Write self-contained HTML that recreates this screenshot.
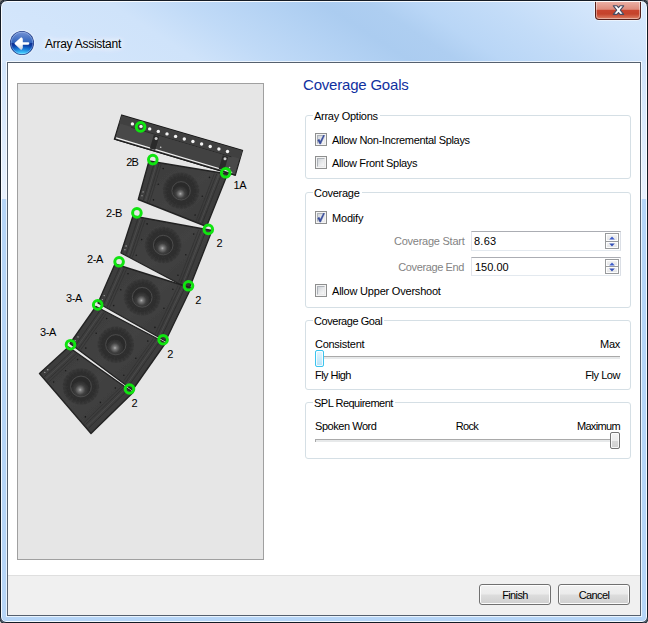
<!DOCTYPE html>
<html>
<head>
<meta charset="utf-8">
<title>Array Assistant</title>
<style>
html,body{margin:0;padding:0;}
body{width:648px;height:623px;overflow:hidden;background:linear-gradient(#858585 0,#a8a8a8 8px,#f4f4f4 20px,#fff 100%);position:relative;font-family:"Liberation Sans",sans-serif;font-size:11px;color:#000;letter-spacing:-0.27px;}
#win{position:absolute;left:0;top:0;width:648px;height:623px;border-radius:7px 7px 6px 6px;background:#b6d5f7;}
#title{position:absolute;left:0;top:0;width:648px;height:63px;border-radius:7px 7px 0 0;background:linear-gradient(33deg,#d5e7fc 0%,#cfe3fa 27%,#c0daf7 37%,#b2d1f3 49%,#abccf0 55.5%,#aecef1 62%,#b9d6f6 68%,#c3dcf8 78%,#d2e5fb 90%,#d8e9fd 100%);}
.side{position:absolute;top:63px;width:6px;height:136px;background:linear-gradient(#d0e4fb,#e8f1fd);}
#win:after{content:"";position:absolute;left:0;top:0;right:0;bottom:0;border:1px solid #141b25;border-radius:7px 7px 6px 6px;box-shadow:inset 0 0 0 1px rgba(255,255,255,.85),0 0 1px .4px #141b25;}
#client{position:absolute;left:7px;top:62px;width:632px;height:552px;border:1px solid #55606e;background:#fff;box-shadow:0 0 0 1px rgba(255,255,255,.7);}
#footer{position:absolute;left:0;top:512px;width:632px;height:39px;background:#f0f0f0;border-top:1px solid #dfdfdf;}
.t{position:absolute;white-space:nowrap;line-height:13px;height:13px;}
.r{text-align:right;}
.grp{position:absolute;border:1px solid #d5dfe5;border-radius:3px;}
.grp span{position:absolute;left:7px;top:-6px;background:#fff;padding:0 2px 0 1px;line-height:13px;white-space:nowrap;}
.cb{position:absolute;width:10px;height:11px;border:1px solid #8e8f8f;background:#f4f4f4;}
.cb i{position:absolute;left:1px;top:1px;width:6px;height:7px;border:1px solid;border-color:#aeb3b9 #e9e9ea #e9e9ea #aeb3b9;background:linear-gradient(135deg,#cfd3d8 0%,#e6e8ea 50%,#f7f7f7 100%);}
.cb svg{position:absolute;left:1px;top:1px;}
.edit{position:absolute;height:18px;border:1px solid;border-color:#abadb3 #dbdfe6 #e3e9ef #e2e3ea;background:#fff;}
.spin{position:absolute;width:12px;height:7px;border:1px solid #989a9c;background:linear-gradient(#f4f4f4,#e2e3e5);box-shadow:inset 0 0 0 1px rgba(255,255,255,.9);}
.spin.d{height:6px;}
.spin svg{position:absolute;left:0;top:0;}
.btn{position:absolute;width:70px;height:19px;border:1px solid #707070;border-radius:3px;background:linear-gradient(#f2f2f2 0%,#ebebeb 48%,#dddddd 52%,#cfcfcf 100%);box-shadow:inset 0 0 0 1px rgba(255,255,255,.9);text-align:center;line-height:21px;}
.thumb{position:absolute;width:7px;height:15px;border:1px solid #3cc4ee;border-radius:2px;background:linear-gradient(#e6f6fd,#b5e2f8);box-shadow:inset 0 0 0 1px rgba(255,255,255,.8);}
.thumb.g{width:8px;border-color:#737373;background:linear-gradient(#f3f3f3 0%,#ececec 50%,#d8d8d8 52%,#d0d0d0 100%);}
.track{position:absolute;height:2px;background:#e7e9ea;border-top:1px solid #a9a9a9;border-left:1px solid #a9a9a9;}
</style>
</head>
<body>
<div id="win">
  <div id="title"></div>
  <div class="side" style="left:1px"></div><div class="side" style="left:641px"></div>
  <!-- close button -->
  <div id="close" style="position:absolute;left:595px;top:1px;width:44px;height:18px;border:1px solid #56201b;border-top:none;border-radius:0 0 4px 4px;background:linear-gradient(#ecb3a8 0%,#de8c7c 46%,#c9452f 52%,#c4432b 72%,#dd8065 100%);box-shadow:inset 0 0 0 1px rgba(255,255,255,.4),0 0 0 1px rgba(255,255,255,.55);">
    <svg width="44" height="18" style="position:absolute;left:0;top:0"><path d="M17.3 4.8h3.7l1.5 1.9 1.5-1.9h3.7l-3.4 4.3 3.4 4.3h-3.7l-1.5-1.9-1.5 1.9h-3.7l3.4-4.3z" fill="#fff" stroke="#474c63" stroke-width="1.1" stroke-linejoin="round"/></svg>
  </div>
  <!-- back button -->
  <svg width="30" height="30" style="position:absolute;left:7.3px;top:27.6px" viewBox="0 0 30 30">
    <defs>
      <linearGradient id="bkt" x1="0" y1="0" x2="0" y2="1"><stop offset="0" stop-color="#b4c1e8"/><stop offset=".3" stop-color="#6f8fd2"/><stop offset="1" stop-color="#2a60bb"/></linearGradient>
      <radialGradient id="bkb" cx="50%" cy="82%" r="85%"><stop offset="0" stop-color="#74f2ff"/><stop offset=".22" stop-color="#3fc8fb"/><stop offset=".55" stop-color="#1878d6"/><stop offset=".85" stop-color="#0a3ba2"/><stop offset="1" stop-color="#0a2f96"/></radialGradient>
      <linearGradient id="arw" x1="0" y1="0" x2="0" y2="1"><stop offset="0" stop-color="#ffffff"/><stop offset=".55" stop-color="#ffffff"/><stop offset="1" stop-color="#cfd6e2"/></linearGradient>
      <clipPath id="bkc"><circle cx="15" cy="15" r="11.3"/></clipPath>
    </defs>
    <circle cx="15" cy="15" r="13.3" fill="#e4effc" opacity=".75"/>
    <circle cx="15" cy="15" r="12" fill="#16327f"/>
    <g clip-path="url(#bkc)">
      <rect x="0" y="0" width="30" height="15.3" fill="url(#bkt)"/>
      <rect x="0" y="15.3" width="30" height="15" fill="url(#bkb)"/>
    </g>
    <circle cx="15" cy="15" r="10.9" fill="none" stroke="#cfe0ff" stroke-opacity=".45" stroke-width=".8"/>
    <g fill="url(#arw)" stroke="url(#arw)" stroke-linejoin="round" stroke-linecap="round">
      <path d="M8.6 15.5L14.2 10.4L14.8 11.2L14.8 19.8L14.2 20.7z" stroke-width="2"/>
      <path d="M14 15.5L21.2 15.5" stroke-width="2.3" fill="none" stroke="#fff"/>
    </g>
  </svg>
  <div class="t" style="left:45px;top:37px;font-size:12px;line-height:14px;height:14px;text-shadow:0 0 5px #fff,0 0 8px #fff,0 0 10px rgba(255,255,255,.8);">Array Assistant</div>

  <div id="client">
    <!-- left preview panel -->
    <div style="position:absolute;left:9px;top:20px;width:245px;height:475px;border:1px solid #a0a0a0;background:#e6e6e6;"></div>
    <div class="t" style="left:295px;top:12px;font-size:15px;line-height:20px;height:20px;color:#1030a0;letter-spacing:-0.2px;">Coverage Goals</div>

    <div class="grp" style="left:297px;top:52px;width:324px;height:62px;"><span>Array Options</span></div>
    <div class="grp" style="left:297px;top:129px;width:324px;height:114px;"><span>Coverage</span></div>
    <div class="grp" style="left:297px;top:257px;width:324px;height:68px;"><span style="letter-spacing:-0.45px;">Coverage Goal</span></div>
    <div class="grp" style="left:297px;top:339px;width:324px;height:55px;"><span style="letter-spacing:-0.50px;">SPL Requirement</span></div>

    <div id="footer"></div>

    <!-- checkboxes -->
    <div class="cb" style="left:307px;top:70px;"><i></i><svg width="10" height="11" viewBox="0 0 10 11"><path d="M0.7 5.3L2.1 4.1L3.3 6.3L6.5 0.1L7.6 0.6L3.7 9.1L2.7 9.1Z" fill="#3a4e9c" stroke="#3a4e9c" stroke-width=".4"/></svg></div>
    <div class="t" style="left:324px;top:71px;letter-spacing:-0.32px;">Allow Non-Incremental Splays</div>
    <div class="cb" style="left:307px;top:93px;"><i></i></div>
    <div class="t" style="left:324px;top:94px;letter-spacing:-0.33px;">Allow Front Splays</div>

    <div class="cb" style="left:307px;top:148px;"><i></i><svg width="10" height="11" viewBox="0 0 10 11"><path d="M0.7 5.3L2.1 4.1L3.3 6.3L6.5 0.1L7.6 0.6L3.7 9.1L2.7 9.1Z" fill="#3a4e9c" stroke="#3a4e9c" stroke-width=".4"/></svg></div>
    <div class="t" style="left:324px;top:149px;letter-spacing:-0.18px;">Modify</div>

    <div class="t r" style="left:356.5px;width:100px;top:172px;color:#838383;letter-spacing:-0.25px;">Coverage Start</div>
    <div class="edit" style="left:463px;top:168px;width:148px;"></div>
    <div class="t" style="left:466px;top:172px;letter-spacing:0.25px;">8.63</div>
    <div class="spin" style="left:597px;top:170px;"><svg width="12" height="7" viewBox="0 0 12 7"><path d="M3.2 5.6L6 2.4L8.8 5.6z" fill="#3d5ccc"/></svg></div>
    <div class="spin d" style="left:597px;top:178px;"><svg width="12" height="6" viewBox="0 0 12 6"><path d="M3.2 1.4L8.8 1.4L6 4.6z" fill="#3450b8"/></svg></div>

    <div class="t r" style="left:356px;width:100px;top:198px;color:#838383;letter-spacing:-0.38px;">Coverage End</div>
    <div class="edit" style="left:463px;top:194px;width:148px;height:17px;"></div>
    <div class="t" style="left:467px;top:198px;letter-spacing:0;">150.00</div>
    <div class="spin d" style="left:597px;top:196px;"><svg width="12" height="7" viewBox="0 0 12 7"><path d="M3.2 5.6L6 2.4L8.8 5.6z" fill="#3d5ccc"/></svg></div>
    <div class="spin d" style="left:597px;top:203px;"><svg width="12" height="6" viewBox="0 0 12 6"><path d="M3.2 1.4L8.8 1.4L6 4.6z" fill="#3450b8"/></svg></div>

    <div class="cb" style="left:307px;top:221px;"><i></i></div>
    <div class="t" style="left:324px;top:222px;letter-spacing:-0.21px;">Allow Upper Overshoot</div>

    <!-- sliders -->
    <div class="t" style="left:307px;top:275px;">Consistent</div>
    <div class="t r" style="left:512px;width:100px;top:275px;">Max</div>
    <div class="track" style="left:307px;top:293px;width:304px;"></div>
    <div class="thumb" style="left:307px;top:287px;"></div>
    <div class="t" style="left:307px;top:306px;letter-spacing:-0.55px;">Fly High</div>
    <div class="t r" style="left:512px;width:100px;top:306px;letter-spacing:-0.45px;">Fly Low</div>

    <div class="t" style="left:307px;top:357px;letter-spacing:-0.45px;">Spoken Word</div>
    <div class="t" style="left:409px;width:100px;top:357px;text-align:center;letter-spacing:-0.70px;">Rock</div>
    <div class="t r" style="left:512px;width:100px;top:357px;letter-spacing:-0.65px;">Maximum</div>
    <div class="track" style="left:307px;top:376px;width:304px;"></div>
    <div class="thumb g" style="left:602px;top:369px;"></div>

    <div class="btn" style="left:471px;top:521px;letter-spacing:-0.60px;">Finish</div>
    <div class="btn" style="left:550px;top:521px;letter-spacing:-0.60px;">Cancel</div>

  </div>
<svg id="arr" width="648" height="623" viewBox="0 0 648 623" style="position:absolute;left:0;top:0;">
<defs>
<radialGradient id="cone" cx="46%" cy="66%" r="55%"><stop offset="0" stop-color="#b0b0b0"/><stop offset=".15" stop-color="#7a7a7a"/><stop offset=".45" stop-color="#3e3e3e"/><stop offset=".8" stop-color="#2a2a2a"/><stop offset="1" stop-color="#2c2c2c"/></radialGradient>
<radialGradient id="gr" cx="50%" cy="50%" r="50%"><stop offset="0" stop-color="#2a2a2a"/><stop offset=".75" stop-color="#303030"/><stop offset="1" stop-color="#303030" stop-opacity="0"/></radialGradient>
<linearGradient id="cab" x1="0" y1="0" x2="1" y2="1"><stop offset="0" stop-color="#3a3a3a"/><stop offset=".5" stop-color="#424242"/><stop offset="1" stop-color="#363636"/></linearGradient>
<filter id="soft" x="-5%" y="-5%" width="110%" height="110%"><feGaussianBlur stdDeviation="0.45"/></filter>
</defs>
<g filter="url(#soft)">
<polygon points="121.7,115.1 242.5,150.3 235.3,175.3 114.4,139.2" fill="#484848" stroke="#1e1e1e" stroke-width="1.2"/>
<polygon points="121.6,115.6 242.4,150.8 240.1,158.8 119.2,123.3" fill="#404040"/>
<polyline points="131.2,127.3 231.4,156.8" stroke="#2c2c2c" stroke-width="1" fill="none"/>
<polygon points="160.0,136.3 222.8,154.8 219.1,167.8 156.2,149.0" fill="#434343"/>
<polyline points="116.1,137.9 232.2,172.5" stroke="#f2f2f2" stroke-width="1.3" fill="none"/>
<polyline points="114.4,139.2 235.3,175.3" stroke="#1e1e1e" stroke-width="1" fill="none"/>
<circle cx="132.4" cy="123.9" r="1.7" fill="#f4f4f4"/>
<circle cx="141.0" cy="126.4" r="1.7" fill="#f4f4f4"/>
<circle cx="149.7" cy="128.9" r="1.7" fill="#f4f4f4"/>
<circle cx="158.3" cy="131.4" r="1.7" fill="#f4f4f4"/>
<circle cx="167.0" cy="133.9" r="1.7" fill="#f4f4f4"/>
<circle cx="175.6" cy="136.4" r="1.7" fill="#f4f4f4"/>
<circle cx="184.3" cy="139.0" r="1.7" fill="#f4f4f4"/>
<circle cx="192.9" cy="141.5" r="1.7" fill="#f4f4f4"/>
<circle cx="201.6" cy="144.0" r="1.7" fill="#f4f4f4"/>
<circle cx="210.2" cy="146.5" r="1.7" fill="#f4f4f4"/>
<circle cx="218.9" cy="149.0" r="1.7" fill="#f4f4f4"/>
<circle cx="227.5" cy="151.5" r="1.7" fill="#f4f4f4"/>
<polygon points="153.8,135.1 159.3,136.7 155.3,150.1 149.8,148.5" fill="#2a2a2a"/>
<circle cx="156.1" cy="138.4" r="1.5" fill="#cfcfcf"/>
<circle cx="160.7" cy="147.2" r=".8" fill="#cfcfcf"/>
<polygon points="222.7,155.3 228.1,156.9 224.2,170.6 218.7,169.0" fill="#2a2a2a"/>
<circle cx="225.0" cy="158.7" r="1.5" fill="#cfcfcf"/>
<circle cx="229.6" cy="167.6" r=".8" fill="#cfcfcf"/>
<polygon points="149.0,161.0 227.5,174.0 206.5,226.5 138.3,199.5" fill="url(#cab)" stroke="#232323" stroke-width="1.4" stroke-linejoin="round"/>
<line x1="154.2" y1="163.1" x2="143.4" y2="200.2" stroke="#2a2a2a" stroke-width=".7"/>
<line x1="156.5" y1="163.5" x2="145.5" y2="201.0" stroke="#505050" stroke-width=".7"/>
<line x1="158.8" y1="163.9" x2="147.5" y2="201.8" stroke="#2c2c2c" stroke-width=".7"/>
<line x1="161.2" y1="164.3" x2="149.6" y2="202.6" stroke="#2f2f2f" stroke-width=".7"/>
<line x1="214.4" y1="173.4" x2="196.2" y2="220.7" stroke="#2f2f2f" stroke-width=".7"/>
<line x1="216.7" y1="173.8" x2="198.2" y2="221.5" stroke="#2c2c2c" stroke-width=".7"/>
<line x1="219.1" y1="174.2" x2="200.3" y2="222.3" stroke="#505050" stroke-width=".7"/>
<line x1="221.4" y1="174.6" x2="202.3" y2="223.1" stroke="#2a2a2a" stroke-width=".7"/>
<circle cx="163.2" cy="168.6" r=".8" fill="#1c1c1c"/>
<circle cx="158.3" cy="184.2" r=".8" fill="#1c1c1c"/>
<circle cx="153.5" cy="199.9" r=".8" fill="#1c1c1c"/>
<circle cx="209.5" cy="177.4" r=".8" fill="#1c1c1c"/>
<circle cx="202.3" cy="196.2" r=".8" fill="#1c1c1c"/>
<circle cx="195.1" cy="215.1" r=".8" fill="#1c1c1c"/>
<circle cx="143.1" cy="191.9" r=".7" fill="#aaa"/>
<circle cx="142.0" cy="195.8" r=".7" fill="#999"/>
<circle cx="181.1" cy="190.8" r="19" fill="url(#gr)"/>
<circle cx="181.1" cy="190.8" r="15.5" fill="none" stroke="#2c2c2c" stroke-width="5" stroke-dasharray="2.2 1.6" opacity=".32"/>
<circle cx="181.1" cy="190.8" r="9.2" fill="url(#cone)" stroke="#585858" stroke-width=".7"/>
<polygon points="133.0,216.0 212.0,230.5 189.0,289.0 121.0,253.0" fill="url(#cab)" stroke="#232323" stroke-width="1.4" stroke-linejoin="round"/>
<line x1="138.1" y1="218.2" x2="126.1" y2="254.4" stroke="#2a2a2a" stroke-width=".7"/>
<line x1="140.5" y1="218.6" x2="128.2" y2="255.4" stroke="#505050" stroke-width=".7"/>
<line x1="142.9" y1="219.1" x2="130.2" y2="256.5" stroke="#2c2c2c" stroke-width=".7"/>
<line x1="145.2" y1="219.5" x2="132.3" y2="257.5" stroke="#2f2f2f" stroke-width=".7"/>
<line x1="198.7" y1="229.8" x2="178.8" y2="281.6" stroke="#2f2f2f" stroke-width=".7"/>
<line x1="201.1" y1="230.3" x2="180.8" y2="282.6" stroke="#2c2c2c" stroke-width=".7"/>
<line x1="203.4" y1="230.7" x2="182.9" y2="283.7" stroke="#505050" stroke-width=".7"/>
<line x1="205.8" y1="231.2" x2="184.9" y2="284.8" stroke="#2a2a2a" stroke-width=".7"/>
<circle cx="147.1" cy="223.9" r=".8" fill="#1c1c1c"/>
<circle cx="141.7" cy="239.6" r=".8" fill="#1c1c1c"/>
<circle cx="136.3" cy="255.2" r=".8" fill="#1c1c1c"/>
<circle cx="193.7" cy="234.1" r=".8" fill="#1c1c1c"/>
<circle cx="185.8" cy="254.7" r=".8" fill="#1c1c1c"/>
<circle cx="177.9" cy="275.3" r=".8" fill="#1c1c1c"/>
<circle cx="126.1" cy="246.0" r=".7" fill="#aaa"/>
<circle cx="124.9" cy="249.7" r=".7" fill="#999"/>
<circle cx="163.2" cy="245.1" r="19" fill="url(#gr)"/>
<circle cx="163.2" cy="245.1" r="15.5" fill="none" stroke="#2c2c2c" stroke-width="5" stroke-dasharray="2.2 1.6" opacity=".32"/>
<circle cx="163.2" cy="245.1" r="9.8" fill="url(#cone)" stroke="#585858" stroke-width=".7"/>
<polygon points="115.0,264.0 191.0,288.0 165.5,341.0 98.0,303.0" fill="url(#cab)" stroke="#232323" stroke-width="1.4" stroke-linejoin="round"/>
<line x1="119.8" y1="266.9" x2="103.3" y2="304.5" stroke="#2a2a2a" stroke-width=".7"/>
<line x1="122.1" y1="267.6" x2="105.3" y2="305.6" stroke="#505050" stroke-width=".7"/>
<line x1="124.3" y1="268.3" x2="107.3" y2="306.7" stroke="#2c2c2c" stroke-width=".7"/>
<line x1="126.6" y1="269.1" x2="109.4" y2="307.8" stroke="#2f2f2f" stroke-width=".7"/>
<line x1="178.1" y1="285.7" x2="155.4" y2="333.4" stroke="#2f2f2f" stroke-width=".7"/>
<line x1="180.4" y1="286.4" x2="157.5" y2="334.5" stroke="#2c2c2c" stroke-width=".7"/>
<line x1="182.7" y1="287.1" x2="159.5" y2="335.7" stroke="#505050" stroke-width=".7"/>
<line x1="184.9" y1="287.9" x2="161.5" y2="336.8" stroke="#2a2a2a" stroke-width=".7"/>
<circle cx="128.0" cy="273.8" r=".8" fill="#1c1c1c"/>
<circle cx="120.8" cy="289.7" r=".8" fill="#1c1c1c"/>
<circle cx="113.7" cy="305.6" r=".8" fill="#1c1c1c"/>
<circle cx="172.9" cy="289.2" r=".8" fill="#1c1c1c"/>
<circle cx="163.9" cy="308.3" r=".8" fill="#1c1c1c"/>
<circle cx="154.9" cy="327.4" r=".8" fill="#1c1c1c"/>
<circle cx="104.2" cy="295.6" r=".7" fill="#aaa"/>
<circle cx="102.4" cy="299.6" r=".7" fill="#999"/>
<circle cx="142.2" cy="297.3" r="19" fill="url(#gr)"/>
<circle cx="142.2" cy="297.3" r="15.5" fill="none" stroke="#2c2c2c" stroke-width="5" stroke-dasharray="2.2 1.6" opacity=".32"/>
<circle cx="142.2" cy="297.3" r="9.9" fill="url(#cone)" stroke="#585858" stroke-width=".7"/>
<polygon points="96.0,306.5 165.5,343.0 132.5,390.0 70.0,343.5" fill="url(#cab)" stroke="#232323" stroke-width="1.4" stroke-linejoin="round"/>
<line x1="100.1" y1="310.2" x2="75.2" y2="345.6" stroke="#2a2a2a" stroke-width=".7"/>
<line x1="102.1" y1="311.3" x2="77.1" y2="347.0" stroke="#505050" stroke-width=".7"/>
<line x1="104.2" y1="312.4" x2="78.9" y2="348.4" stroke="#2c2c2c" stroke-width=".7"/>
<line x1="106.3" y1="313.5" x2="80.8" y2="349.8" stroke="#2f2f2f" stroke-width=".7"/>
<line x1="153.4" y1="338.5" x2="123.5" y2="381.2" stroke="#2f2f2f" stroke-width=".7"/>
<line x1="155.5" y1="339.6" x2="125.3" y2="382.6" stroke="#2c2c2c" stroke-width=".7"/>
<line x1="157.6" y1="340.7" x2="127.2" y2="384.0" stroke="#505050" stroke-width=".7"/>
<line x1="159.7" y1="341.8" x2="129.1" y2="385.4" stroke="#2a2a2a" stroke-width=".7"/>
<circle cx="106.6" cy="318.5" r=".8" fill="#1c1c1c"/>
<circle cx="96.2" cy="333.3" r=".8" fill="#1c1c1c"/>
<circle cx="85.8" cy="348.1" r=".8" fill="#1c1c1c"/>
<circle cx="147.8" cy="341.1" r=".8" fill="#1c1c1c"/>
<circle cx="135.8" cy="358.2" r=".8" fill="#1c1c1c"/>
<circle cx="123.8" cy="375.3" r=".8" fill="#1c1c1c"/>
<circle cx="78.0" cy="336.9" r=".7" fill="#aaa"/>
<circle cx="75.3" cy="340.6" r=".7" fill="#999"/>
<circle cx="115.8" cy="344.7" r="19" fill="url(#gr)"/>
<circle cx="115.8" cy="344.7" r="15.5" fill="none" stroke="#2c2c2c" stroke-width="5" stroke-dasharray="2.2 1.6" opacity=".32"/>
<circle cx="115.8" cy="344.7" r="10.1" fill="url(#cone)" stroke="#585858" stroke-width=".7"/>
<polygon points="68.5,347.0 133.0,392.5 91.0,433.5 39.5,373.5" fill="url(#cab)" stroke="#232323" stroke-width="1.4" stroke-linejoin="round"/>
<line x1="72.1" y1="351.0" x2="44.0" y2="376.9" stroke="#2a2a2a" stroke-width=".7"/>
<line x1="74.0" y1="352.4" x2="45.6" y2="378.7" stroke="#505050" stroke-width=".7"/>
<line x1="76.0" y1="353.8" x2="47.1" y2="380.4" stroke="#2c2c2c" stroke-width=".7"/>
<line x1="77.9" y1="355.1" x2="48.7" y2="382.2" stroke="#2f2f2f" stroke-width=".7"/>
<line x1="121.5" y1="386.4" x2="84.0" y2="422.7" stroke="#2f2f2f" stroke-width=".7"/>
<line x1="123.4" y1="387.8" x2="85.5" y2="424.5" stroke="#2c2c2c" stroke-width=".7"/>
<line x1="125.3" y1="389.1" x2="87.1" y2="426.3" stroke="#505050" stroke-width=".7"/>
<line x1="127.3" y1="390.5" x2="88.6" y2="428.1" stroke="#2a2a2a" stroke-width=".7"/>
<circle cx="77.6" cy="359.6" r=".8" fill="#1c1c1c"/>
<circle cx="65.6" cy="370.8" r=".8" fill="#1c1c1c"/>
<circle cx="53.6" cy="382.0" r=".8" fill="#1c1c1c"/>
<circle cx="115.4" cy="388.0" r=".8" fill="#1c1c1c"/>
<circle cx="100.4" cy="402.4" r=".8" fill="#1c1c1c"/>
<circle cx="85.4" cy="416.9" r=".8" fill="#1c1c1c"/>
<circle cx="47.8" cy="369.7" r=".7" fill="#aaa"/>
<circle cx="44.8" cy="372.4" r=".7" fill="#999"/>
<circle cx="81.0" cy="386.5" r="19" fill="url(#gr)"/>
<circle cx="81.0" cy="386.5" r="15.5" fill="none" stroke="#2c2c2c" stroke-width="5" stroke-dasharray="2.2 1.6" opacity=".32"/>
<circle cx="81.0" cy="386.5" r="10.4" fill="url(#cone)" stroke="#585858" stroke-width=".7"/>
</g>
<circle cx="140.6" cy="126.9" r="4.3" fill="none" stroke="#10e410" stroke-width="3"/>
<circle cx="152.8" cy="159.6" r="4.3" fill="none" stroke="#10e410" stroke-width="3"/>
<circle cx="225.7" cy="172.8" r="4.3" fill="none" stroke="#10e410" stroke-width="3"/>
<circle cx="136.9" cy="212.9" r="4.3" fill="none" stroke="#10e410" stroke-width="3"/>
<circle cx="208.3" cy="229.4" r="4.3" fill="none" stroke="#10e410" stroke-width="3"/>
<circle cx="119.1" cy="261.8" r="4.3" fill="none" stroke="#10e410" stroke-width="3"/>
<circle cx="188.5" cy="285.8" r="4.3" fill="none" stroke="#10e410" stroke-width="3"/>
<circle cx="97.7" cy="304.9" r="4.3" fill="none" stroke="#10e410" stroke-width="3"/>
<circle cx="163.1" cy="339.7" r="4.3" fill="none" stroke="#10e410" stroke-width="3"/>
<circle cx="70.5" cy="344.7" r="4.3" fill="none" stroke="#10e410" stroke-width="3"/>
<circle cx="129.5" cy="389.0" r="4.3" fill="none" stroke="#10e410" stroke-width="3"/>
<text x="126.2" y="166" font-family="Liberation Sans, sans-serif" font-size="11" letter-spacing="-0.9" fill="#000">2B</text>
<text x="233.5" y="189" font-family="Liberation Sans, sans-serif" font-size="11" letter-spacing="-0.4" fill="#000">1A</text>
<text x="106.0" y="217" font-family="Liberation Sans, sans-serif" font-size="11" letter-spacing="-0.4" fill="#000">2-B</text>
<text x="216.5" y="247" font-family="Liberation Sans, sans-serif" font-size="11" letter-spacing="-0.4" fill="#000">2</text>
<text x="87.0" y="263" font-family="Liberation Sans, sans-serif" font-size="11" letter-spacing="-0.4" fill="#000">2-A</text>
<text x="195.3" y="304" font-family="Liberation Sans, sans-serif" font-size="11" letter-spacing="-0.4" fill="#000">2</text>
<text x="66.0" y="302" font-family="Liberation Sans, sans-serif" font-size="11" letter-spacing="-0.4" fill="#000">3-A</text>
<text x="167.3" y="358" font-family="Liberation Sans, sans-serif" font-size="11" letter-spacing="-0.4" fill="#000">2</text>
<text x="40.0" y="336" font-family="Liberation Sans, sans-serif" font-size="11" letter-spacing="-0.4" fill="#000">3-A</text>
<text x="131.5" y="407" font-family="Liberation Sans, sans-serif" font-size="11" letter-spacing="-0.4" fill="#000">2</text>
</svg>
</div>
</body>
</html>
